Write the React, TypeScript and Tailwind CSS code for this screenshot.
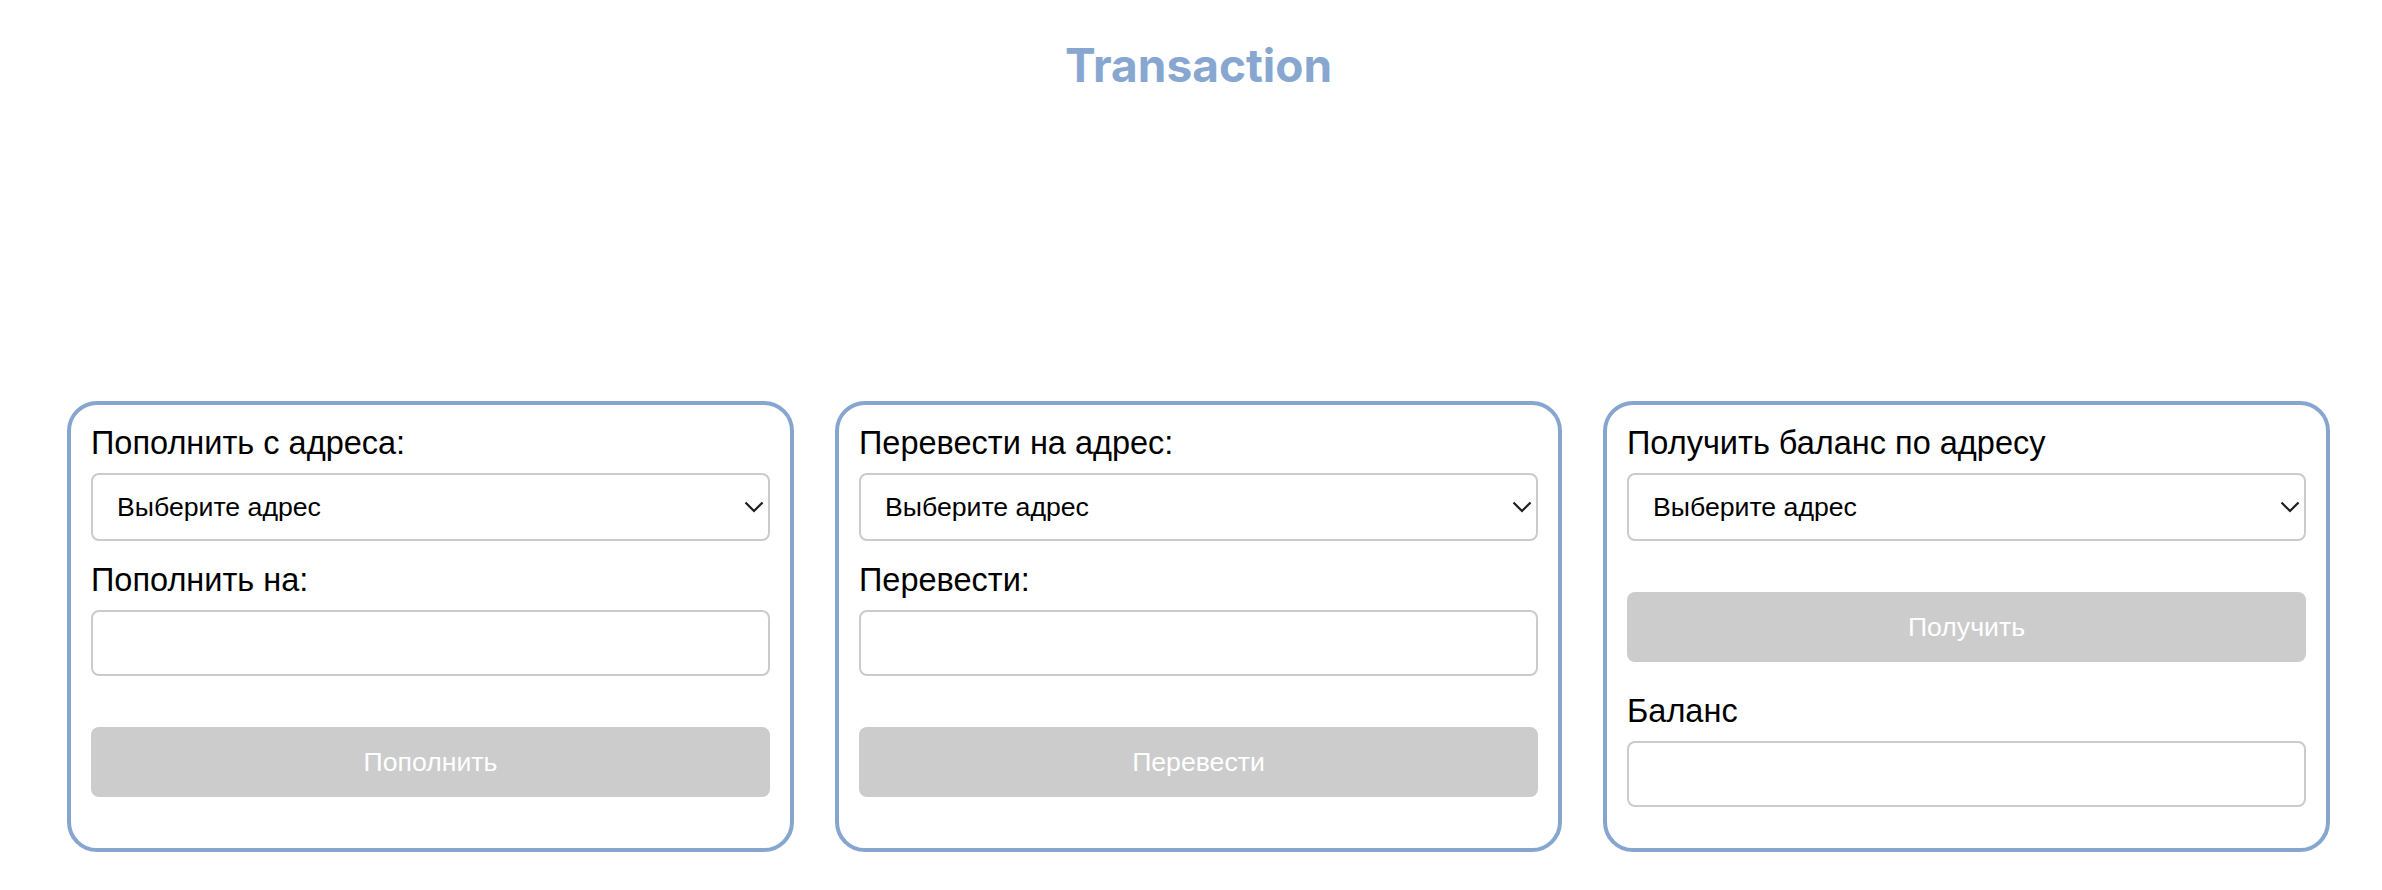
import React from 'react';

const SelectField: React.FC = () => (
    <div className="relative mt-[11px] h-[68px]">
        <select
            className="w-full h-full appearance-none bg-white border-2 border-[#cbcbcb] rounded-[8px] pl-[24px] pr-12 text-[26.67px] text-black focus:outline-none"
            defaultValue=""
        >
            <option value="">Выберите адрес</option>
        </select>
        <div className="pointer-events-none absolute inset-y-0 right-[6px] flex items-center">
            <svg width="20" height="12" viewBox="0 0 20 12" fill="none" stroke="#1f1f1f" strokeWidth={2.2}>
                <path d="M1.5 1.5 L10 10 L18.5 1.5" />
            </svg>
        </div>
    </div>
);

const Label: React.FC<{ children: React.ReactNode; className?: string }> = ({ children, className = '' }) => (
    <label className={`block text-[32.5px] leading-[37px] text-black ${className}`}>{children}</label>
);

const TextInput: React.FC = () => (
    <input
        type="text"
        className="mt-[11px] block w-full h-[66px] bg-white border-2 border-[#cbcbcb] rounded-[8px] px-[24px] text-[26.67px] focus:outline-none"
    />
);

const ActionButton: React.FC<{ children: React.ReactNode; className?: string }> = ({ children, className = '' }) => (
    <button
        type="button"
        disabled
        className={`block w-full h-[70px] bg-[#cccccc] rounded-[8px] text-[26.67px] text-white ${className}`}
    >
        {children}
    </button>
);

const Card: React.FC<{ children: React.ReactNode }> = ({ children }) => (
    <div className="w-[727px] border-[4px] border-[#87a6cf] rounded-[30px] px-5 pt-5 pb-[41px]">
        {children}
    </div>
);

export default function App() {
    return (
        <div className="min-h-screen bg-white pl-[15px]" style={{ fontFamily: '"Liberation Sans", Arial, sans-serif' }}>
            <h1
                className="pt-[37px] text-center text-[46px] leading-[56px] font-bold text-[#87a7d1]"
                style={{ fontFamily: 'Inter, "Liberation Sans", sans-serif' }}
            >
                Transaction
            </h1>

            <div className="mt-[308px] flex justify-center items-stretch gap-[41px]">
                <Card>
                    <Label>Пополнить с адреса:</Label>
                    <SelectField />
                    <Label className="mt-[21px]">Пополнить на:</Label>
                    <TextInput />
                    <ActionButton className="mt-[51px]">Пополнить</ActionButton>
                </Card>

                <Card>
                    <Label>Перевести на адрес:</Label>
                    <SelectField />
                    <Label className="mt-[21px]">Перевести:</Label>
                    <TextInput />
                    <ActionButton className="mt-[51px]">Перевести</ActionButton>
                </Card>

                <Card>
                    <Label>Получить баланс по адресу</Label>
                    <SelectField />
                    <ActionButton className="mt-[51px]">Получить</ActionButton>
                    <Label className="mt-[31px]">Баланс</Label>
                    <TextInput />
                </Card>
            </div>
        </div>
    );
}
